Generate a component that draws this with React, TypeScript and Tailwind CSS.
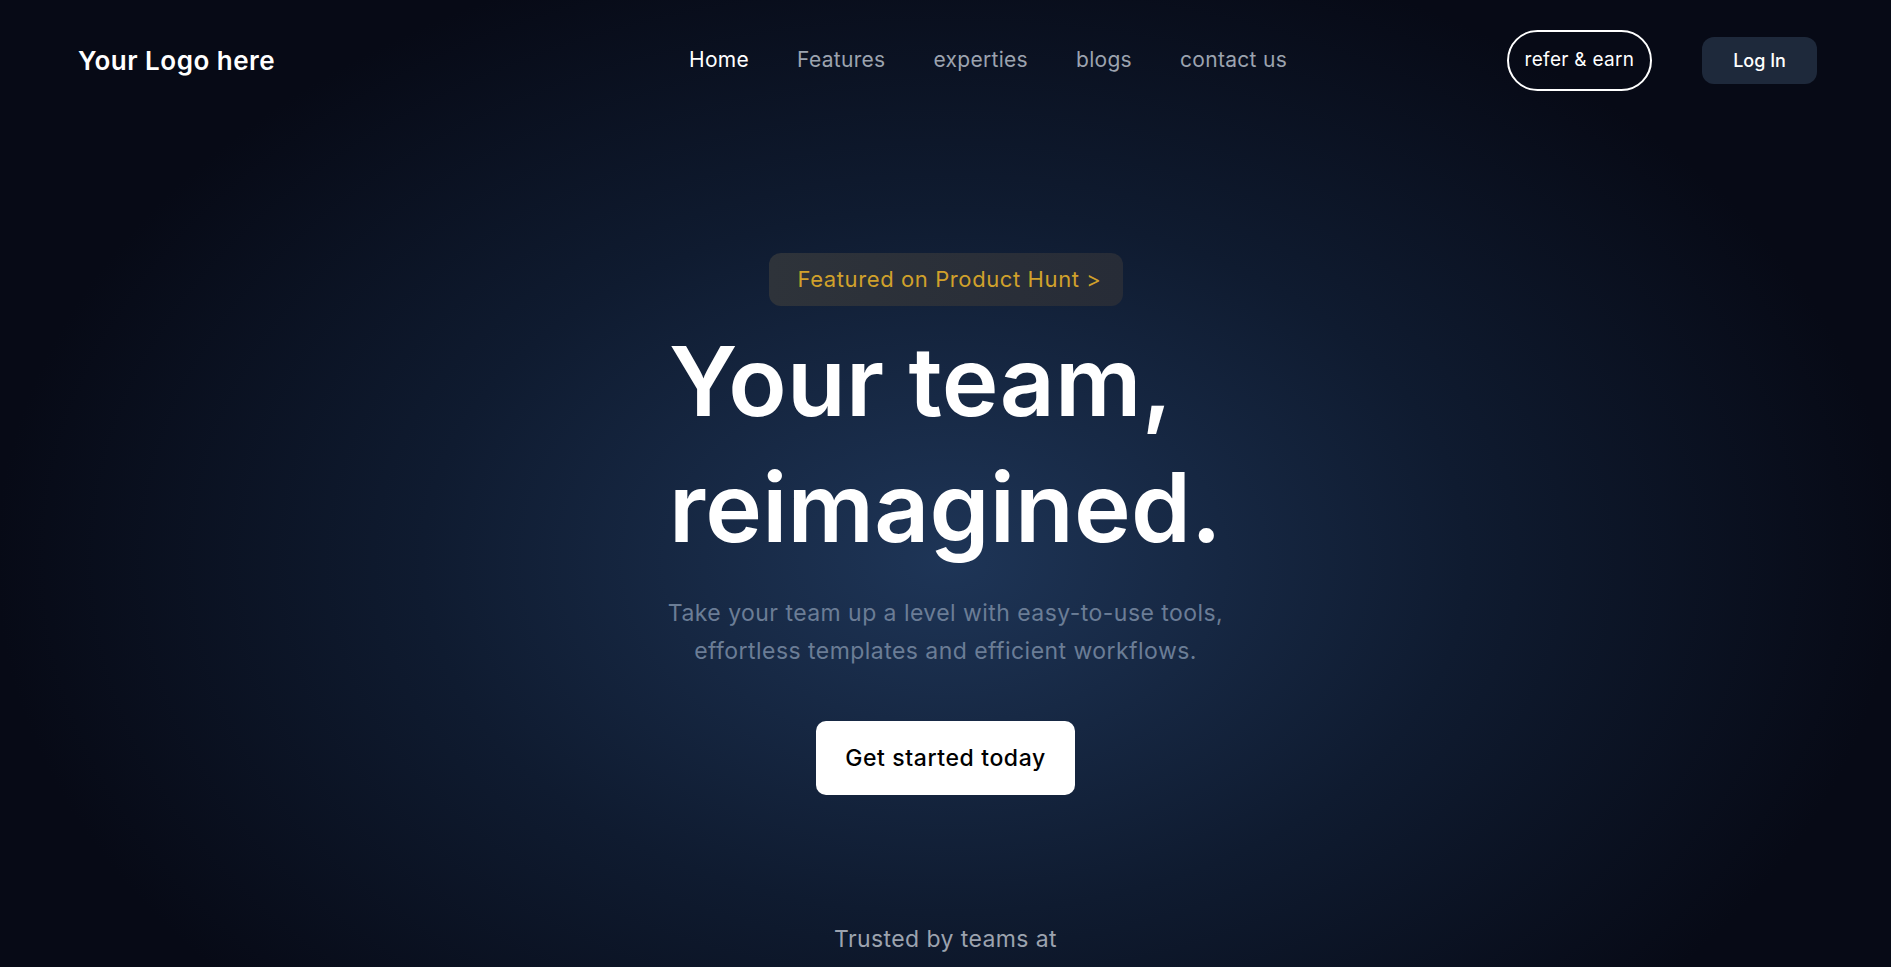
import React from "react";

export default function App() {
  const nav = ["Home", "Features", "experties", "blogs", "contact us"];
  return (
    <div className="min-h-screen w-full overflow-hidden bg-[#070a16] bg-[radial-gradient(ellipse_950px_640px_at_50%_58%,#1e3557_0%,#0f1b30_55%,#070a16_100%)] font-['Inter','Noto_Sans',sans-serif] text-white">
      <header className="flex h-[120px] items-center pl-[78px] pr-[74px]">
        <div className="w-[611px] shrink-0 text-[26px] font-semibold tracking-[0.5px] text-white">
          Your Logo here
        </div>
        <nav className="flex items-center gap-[48px] text-[21px] tracking-[0.3px]">
          {nav.map((n, i) => (
            <a
              key={n}
              href="#"
              className={i === 0 ? "text-white" : "text-[#9ca3af]"}
            >
              {n}
            </a>
          ))}
        </nav>
        <div className="ml-auto flex items-center gap-[50px]">
          <button className="flex h-[61px] w-[145px] items-center justify-center rounded-full border-2 border-white text-[19px] tracking-[0.3px] text-white">
            refer &amp; earn
          </button>
          <button className="flex h-[47px] w-[115px] items-center justify-center rounded-[12px] bg-[#1e293b] text-[18px] font-medium text-white">
            Log In
          </button>
        </div>
      </header>

      <main className="flex flex-col items-center">
        <div className="mt-[133px] flex h-[53px] w-[354px] items-center rounded-[12px] bg-[linear-gradient(90deg,#2e333a,#272c37)] pl-[29px] text-[22px] tracking-[0.6px] text-[#d1a12b]">
          Featured on Product Hunt &gt;
        </div>
        <h1 className="mt-[12px] text-left text-[96px] font-semibold leading-[126px] tracking-[0.2px] text-white">
          Your team,
          <br />
          reimagined.
        </h1>
        <p className="mt-[24px] text-center text-[23px] leading-[38px] tracking-[0.45px] text-[#6b7d96]">
          Take your team up a level with easy-to-use tools,
          <br />
          effortless templates and efficient workflows.
        </p>
        <button className="mt-[51px] flex h-[74px] w-[259px] items-center justify-center rounded-[10px] bg-white text-[23px] font-medium tracking-[0.6px] text-black">
          Get started today
        </button>
        <p className="mt-[127px] text-[23px] tracking-[0.4px] text-[#9ca3af]">Trusted by teams at</p>
      </main>
    </div>
  );
}
